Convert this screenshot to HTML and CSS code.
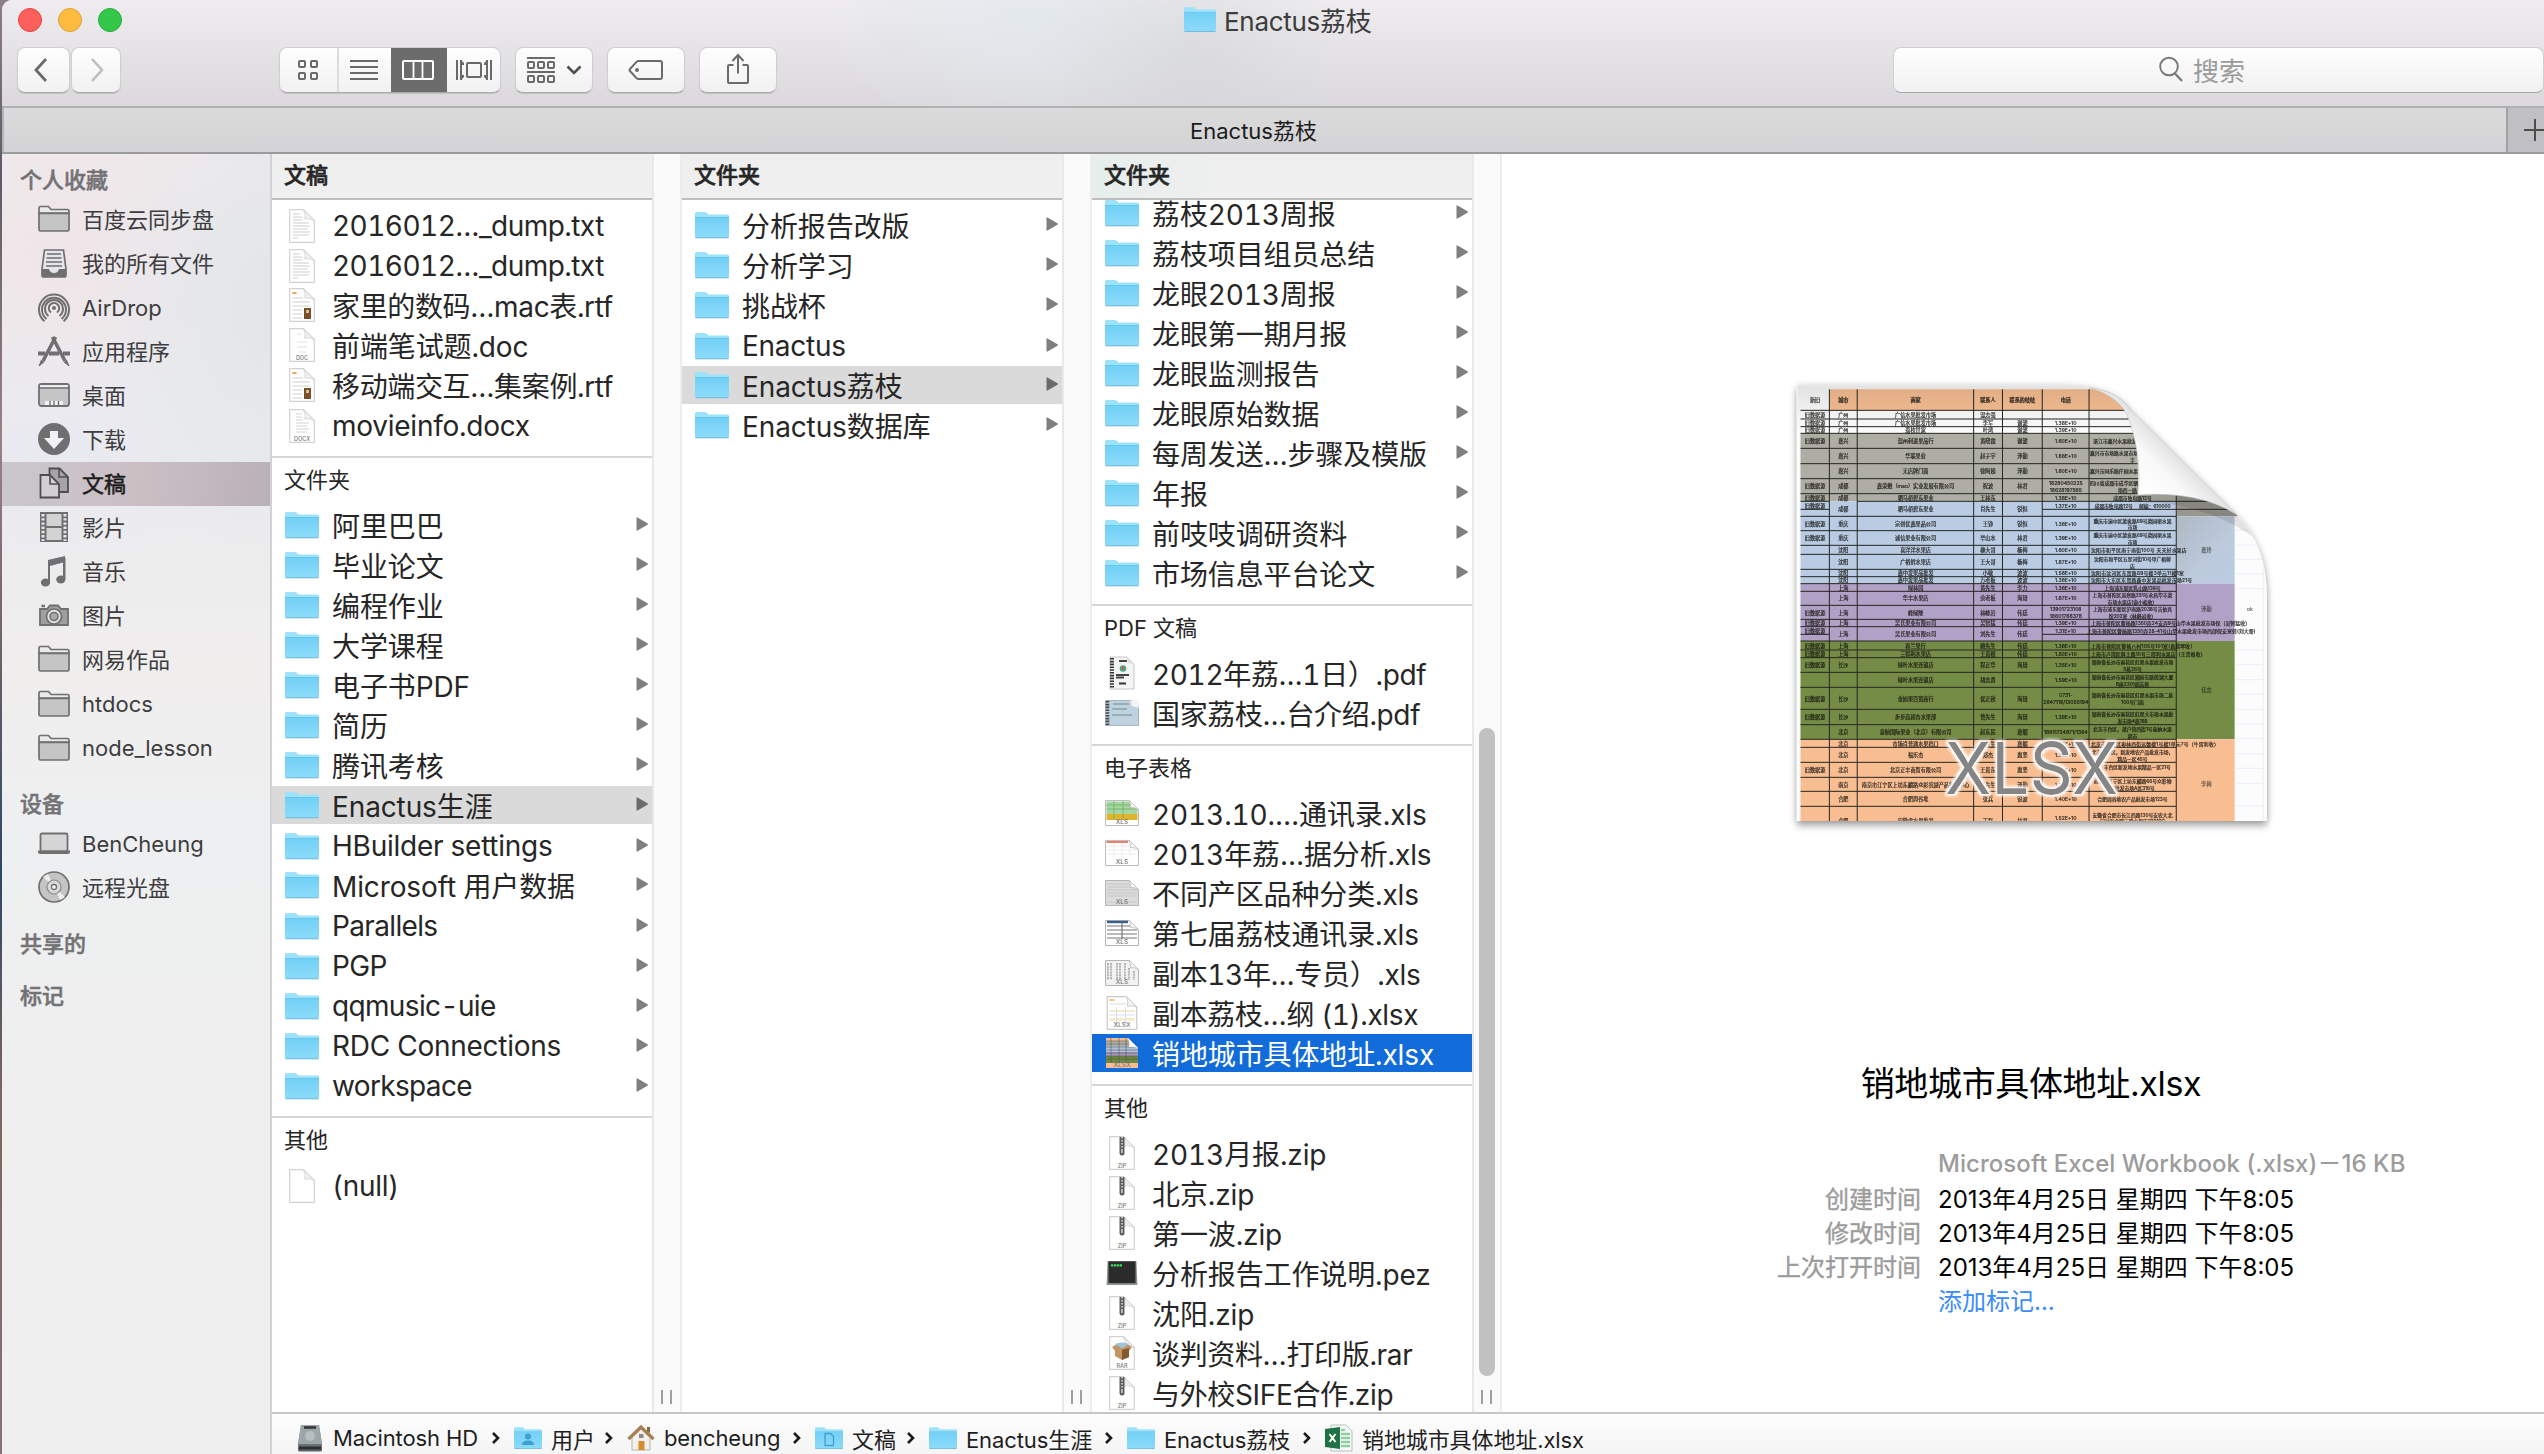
FILE: index.html
```html
<!DOCTYPE html>
<html lang="zh-CN">
<head>
<meta charset="utf-8">
<title>Enactus荔枝</title>
<link rel="stylesheet" href="styles.css">
</head>
<body>
<svg class="sprite" aria-hidden="true">
  <defs>
    <linearGradient id="g-folder" x1="0" y1="0" x2="0" y2="1"><stop offset="0" stop-color="#73d0f6"/><stop offset="1" stop-color="#8ddcfa"/></linearGradient>
    <linearGradient id="g-disk" x1="0" y1="0" x2="0" y2="1"><stop offset="0" stop-color="#9aa0a2"/><stop offset="1" stop-color="#5d6466"/></linearGradient>
    <symbol id="folder" viewBox="0 0 34 28">
      <path d="M0 2.500Q0 1 1.500 1H10Q11.500 1 12.500 2.500L13.300 3.500H32.500Q34 3.500 34 5V10H0Z" fill="#9ce2fb"/>
      <path d="M0 7H34V25.500Q34 27 32.500 27H1.500Q0 27 0 25.500Z" fill="url(#g-folder)"/>
      <path d="M0 6.500H34" stroke="#6ac5ea" stroke-width="1"/>
      <path d="M.500 26.800H33.500" stroke="#6fb6d4" stroke-width="1"/>
    </symbol>
    <symbol id="page" viewBox="0 0 26 34">
      <path d="M.7 .7H14.500L25.300 11.500V33.300H.7Z" fill="#fff" stroke="#d2d2d2" stroke-width="1.200"/>
      <path d="M14.500 .7Q17 5 15.800 10Q21 9 25.300 11.500Z" fill="#f1f1f1" stroke="#cfcfcf" stroke-width=".8"/>
    </symbol>
    <symbol id="txt" viewBox="0 0 26 34">
      <use href="#page" width="26" height="34"/>
      <path d="M4 5H11M4 8H13M4 11H13M4 14H20M4 17H21M4 20H19M4 23H21M4 26H20M4 29H9" stroke="#cfcfcf" stroke-width="1.100"/>
    </symbol>
    <symbol id="rtf" viewBox="0 0 26 34">
      <use href="#page" width="26" height="34"/>
      <path d="M3.500 5H7.500" stroke="#e7a85a" stroke-width="2"/>
      <path d="M3.500 10H14M3.500 14H21M3.500 18H21M3.500 22H13M3.500 26H13M3.500 30H13" stroke="#cfcfcf" stroke-width="1.100"/>
      <path d="M15 20H22V31H15Z" fill="#76502b"/><path d="M17 22H20V25H17Z" fill="#e0c08a"/>
    </symbol>
    <symbol id="doc" viewBox="0 0 26 34">
      <use href="#page" width="26" height="34"/>
      <path d="M8 6H12M8 14H18M8 19H18M10 24H17" stroke="#e2e2e2"/>
      <text x="13" y="31.500" class="tag-text">DOC</text>
    </symbol>
    <symbol id="docx" viewBox="0 0 26 34">
      <use href="#page" width="26" height="34"/>
      <path d="M7 5H13M7 8H13M7 11H14M7 14H20M7 17H18M7 20H20M7 23H18" stroke="#d2d2d2"/>
      <text x="13" y="31.500" class="tag-text">DOCX</text>
    </symbol>
    <symbol id="zip" viewBox="0 0 26 34">
      <use href="#page" width="26" height="34"/>
      <path d="M10.500 1H15.500V17Q15.500 19.500 13 19.500T10.500 17Z" fill="#5b5e60"/>
      <path d="M13 1V13" stroke="#d0d3d4" stroke-width="1.600" stroke-dasharray="1.500 1.500"/><path d="M13 13V17" stroke="#d0d3d4" stroke-width="1.500"/>
      <text x="13" y="31.500" class="tag-text">ZIP</text>
    </symbol>
    <symbol id="rar" viewBox="0 0 26 34">
      <use href="#page" width="26" height="34"/>
      <path d="M3 11L8 8L13 11L18 8L23 11L20 15V21L13 24L6 20V15Z" fill="#c09563"/>
      <path d="M6 8Q12 5 20 8L13 12.500Z" fill="#9cc3dc"/><path d="M13 14L20 12V21L13 24Z" fill="#80592e"/>
      <text x="13" y="31.500" class="tag-text">RAR</text>
    </symbol>
    <symbol id="pez" viewBox="0 0 32 27">
      <path d="M1 1H31L32 26H0Z" fill="#8b9193"/><path d="M2 1.500H30V24H2Z" fill="#2b2b2b"/>
      <path d="M4.500 5.500H16" stroke="#3ddc6a" stroke-width="2.400" stroke-dasharray="2.400 .6"/>
    </symbol>
    <symbol id="pdf1" viewBox="0 0 26 34">
      <path d="M1 1H18L25 8V33H1Z" fill="#f4f4f4" stroke="#c7c7c7"/><path d="M18 1L19 7L25 8Z" fill="#ddd"/>
      <path d="M3 2V32" stroke="#333" stroke-width="4" stroke-dasharray="1.600 1.200"/>
      <path d="M10 5H18M7 19H20M7 21.500H15" stroke="#444" stroke-width="1.800"/><circle cx="14" cy="12.500" r="3.300" fill="#4aa88b"/><circle cx="14" cy="12" r="1.400" fill="#d05545"/>
      <path d="M10 27.500H17" stroke="#333" stroke-width="2"/>
    </symbol>
    <symbol id="pdf2" viewBox="0 0 34 26">
      <path d="M.5 .5H27L33.500 6V25.500H.5Z" fill="#bfd2df" stroke="#a9b4bb"/><path d="M25 .5H33.500V8L27 6Z" fill="#f3f3f3"/>
      <path d="M2.500 1V25" stroke="#444" stroke-width="3.600" stroke-dasharray="1.600 1.200"/><path d="M8 4H24M7 9H22M7 15H27" stroke="#6f8a86" stroke-width="1"/>
    </symbol>
    <symbol id="sheet-fold" viewBox="0 0 34 26">
      <path d="M24 0Q26 4 25.500 7.500Q30 7 34 10Z" fill="#f8f8f8" stroke="#bbb" stroke-width=".8"/>
    </symbol>
    <symbol id="xls-a" viewBox="0 0 34 26">
      <path d="M.5 .5H24L33.500 10V25.500H.5Z" fill="#fff" stroke="#bdbdbd"/>
      <path d="M1.500 1.500H24.500L32.500 9.500V14H1.500Z" fill="#a5d6a0"/><path d="M1.500 14H32.500V20H1.500Z" fill="#e2b32c"/>
      <path d="M1.500 5H27M1.500 9H32M9 1V20M18 1V20" stroke="#6fae6c" stroke-width=".8"/><use href="#sheet-fold" width="34" height="26"/>
      <text x="17" y="23.500" class="tag-text big">XLS</text>
    </symbol>
    <symbol id="xls-b" viewBox="0 0 34 26">
      <path d="M.5 .5H24L33.500 10V25.500H.5Z" fill="#fff" stroke="#bdbdbd"/><path d="M1.500 2H23" stroke="#ee7d6f" stroke-width="2"/>
      <path d="M2 6H25M2 10H31M2 14H31M9 3V17M17 3V17M25 8V17" stroke="#ececec"/><use href="#sheet-fold" width="34" height="26"/>
      <text x="17" y="23.500" class="tag-text big">XLS</text>
    </symbol>
    <symbol id="xls-c" viewBox="0 0 34 26">
      <path d="M.5 .5H24L33.500 10V25.500H.5Z" fill="#dcdcdc" stroke="#b5b5b5"/>
      <path d="M2 4H25M2 7H26M2 10H32M2 13H32M2 16H32M2 22H32" stroke="#c6c6c6"/><use href="#sheet-fold" width="34" height="26"/>
      <text x="17" y="23.500" class="tag-text big">XLS</text>
    </symbol>
    <symbol id="xls-d" viewBox="0 0 34 26">
      <path d="M.5 .5H24L33.500 10V25.500H.5Z" fill="#fff" stroke="#b5b5b5"/><path d="M2 2H23" stroke="#3a5f8f" stroke-width="2.400"/>
      <path d="M2 6H25M2 10H32M2 14H32M2 18H32M17 3V19" stroke="#777" stroke-width="1.200"/><use href="#sheet-fold" width="34" height="26"/>
      <text x="17" y="24" class="tag-text big">XLS</text>
    </symbol>
    <symbol id="xls-e" viewBox="0 0 34 26">
      <path d="M.5 .5H24L33.500 10V25.500H.5Z" fill="#f2f2f2" stroke="#b5b5b5"/>
      <path d="M3 3V20M6 3V20M12 3V20M15 3V20M20 3V20M24 8V20M29 11V20" stroke="#a5a5a5" stroke-width="1.600" stroke-dasharray="2 .8"/><use href="#sheet-fold" width="34" height="26"/>
      <text x="17" y="23.500" class="tag-text big">XLS</text>
    </symbol>
    <symbol id="xlsx-f" viewBox="0 0 31 34">
      <path d="M.7 .7H20L30.300 11V33.300H.7Z" fill="#fff" stroke="#bdbdbd"/><path d="M3 4H8" stroke="#e8b95a" stroke-width="1.500"/>
      <path d="M3 14H28V16H3ZM3 22H28V25H3Z" fill="#f4eccd"/><path d="M3 8H20M3 19H28M10 11V28M19 11V28" stroke="#dcdcf0"/><path d="M20 .7Q22 6 21 10.500Q26 9 30.300 11Z" fill="#f3f3f3" stroke="#c5c5c5" stroke-width=".8"/>
      <text x="15.500" y="31" class="tag-text big">XLSX</text>
    </symbol>
    <symbol id="xlsx-g" viewBox="0 0 32 30">
      <path d="M0 0H22L32 10V30H0Z" fill="#f5bd92"/><path d="M0 3H24L27 8H0Z" fill="#b3b2a6"/><path d="M0 8H30L32 10V14H0Z" fill="#b1c4dc"/><path d="M0 14H32V18H0Z" fill="#a998bd"/><path d="M0 18H32V25H0Z" fill="#6d8842"/>
      <path d="M0 3H24M0 6H25M0 9H28M0 12H32M0 15H32M0 18H32M0 21H32M5 0V25M13 0V25M20 0V25" stroke="#4b4b46" stroke-width=".5"/>
      <path d="M22 0Q24 5 23 9Q28 8 32 10Z" fill="#fff"/>
      <text x="16" y="29" class="tag-text big">XLSX</text>
    </symbol>
    <symbol id="excel" viewBox="0 0 28 28">
      <path d="M6 1H21L27 7V27H6Z" fill="#f6faf7" stroke="#aab5ad" stroke-width=".8"/>
      <path d="M16 6H20M16 10H25M16 14H25M16 18H25M16 22H25" stroke="#8fcda5" stroke-width="2.600"/>
      <path d="M0 5L15 3V25L0 23Z" fill="#1f7244"/><path d="M4.500 10L10.500 18M10.500 10L4.500 18" stroke="#fff" stroke-width="2"/>
    </symbol>
    <symbol id="sfolder" viewBox="0 0 32 28">
      <path d="M1 3Q1 1.500 2.500 1.500H10.500L13 4.500H29.500Q31 4.500 31 6V8H1Z" fill="#e9e9e9" stroke="#6f6f71" stroke-width="1.700"/>
      <path d="M1 8.500H31V24.500Q31 26 29.500 26H2.500Q1 26 1 24.500Z" fill="#c6c5c6" stroke="#6f6f71" stroke-width="1.700"/>
    </symbol>
    <symbol id="arrow" viewBox="0 0 12 14"><path d="M.5 1Q.5 0 1.500 .5L11.500 6.300Q12.300 7 11.500 7.700L1.500 13.500Q.5 14 .5 13Z" fill="currentColor"/></symbol>
    <symbol id="chev" viewBox="0 0 10 14"><path d="M2 2L7 7L2 12" fill="none" stroke="#1b1b1b" stroke-width="2.600"/></symbol>
  </defs>
</svg>

<div class="window">
  <header class="toolbar">
    <div class="titlebar">
      <div class="lights"><i class="light red"></i><i class="light yellow"></i><i class="light green"></i></div>
      <div class="title"><svg class="title-icon"><use href="#folder"/></svg><span>Enactus荔枝</span></div>
    </div>
    <div class="tools">
      <div class="btn back"><svg width="16" height="26" viewBox="0 0 16 26"><path d="M13 2L3 13L13 24" fill="none" stroke="#6b6b6b" stroke-width="2.800"/></svg></div>
      <div class="btn forward"><svg width="16" height="26" viewBox="0 0 16 26"><path d="M3 2L13 13L3 24" fill="none" stroke="#bdbdbd" stroke-width="2.600"/></svg></div>
      <div class="btn views">
        <span class="view"><svg width="22" height="22" viewBox="0 0 22 22" fill="none" stroke="#6a6a6a" stroke-width="2"><rect x="1" y="2" width="6" height="6" rx="1"/><rect x="13" y="2" width="6" height="6" rx="1"/><rect x="1" y="14" width="6" height="6" rx="1"/><rect x="13" y="14" width="6" height="6" rx="1"/></svg></span>
        <span class="view list"><svg width="28" height="22" viewBox="0 0 28 22" stroke="#6a6a6a" stroke-width="2"><path d="M0 2H28M0 8H28M0 14H28M0 20H28"/></svg></span>
        <span class="view active"><svg width="32" height="22" viewBox="0 0 32 22"><rect x="1" y="2" width="30" height="18" rx="1" fill="none" stroke="#fff" stroke-width="2"/><path d="M11.500 2V20M20.500 2V20" stroke="#fff" stroke-width="1.800"/></svg></span>
        <span class="view flow"><svg width="36" height="22" viewBox="0 0 36 22" fill="none" stroke="#6a6a6a" stroke-width="2"><path d="M1 1V21M35 1V21M5 1V21M31 1V21"/><path d="M5 1L8 4V6H5ZM5 21L8 18V16H5ZM31 1L28 4V6H31ZM31 21L28 18V16H31Z" fill="#6a6a6a" stroke="none"/><rect x="11" y="4" width="14" height="14" rx="1"/></svg></span>
      </div>
      <div class="btn arrange">
        <svg width="28" height="28" viewBox="0 0 28 28" fill="none" stroke="#6a6a6a" stroke-width="2"><path d="M0 2H28M0 16H28"/><rect x="1" y="6" width="6" height="6" rx="1"/><rect x="11" y="6" width="6" height="6" rx="1"/><rect x="21" y="6" width="6" height="6" rx="1"/><rect x="1" y="20" width="6" height="6" rx="1"/><rect x="11" y="20" width="6" height="6" rx="1"/><rect x="21" y="20" width="6" height="6" rx="1"/></svg>
        <svg width="16" height="10" viewBox="0 0 16 10"><path d="M1.500 1.500L8 8L14.500 1.500" fill="none" stroke="#4f4f4f" stroke-width="2.600"/></svg>
      </div>
      <div class="btn tag"><svg width="36" height="22" viewBox="0 0 36 22"><path d="M10.500 2H32Q34 2 34 4V18Q34 20 32 20H10.500Q9 20 8 18.500L2 12Q1 11 2 10L8 3.500Q9 2 10.500 2Z" fill="none" stroke="#6a6a6a" stroke-width="2"/><circle cx="9" cy="11" r="2" fill="#6a6a6a"/></svg></div>
      <div class="btn share"><svg width="24" height="32" viewBox="0 0 24 32"><path d="M7.500 12H3.500Q2 12 2 13V29Q2 30 3 30H21Q22 30 22 29V13Q22 12 21 12H16.500M12 20.500V2M6.500 8L12 2L17.500 8" fill="none" stroke="#6a6a6a" stroke-width="2"/></svg></div>
      <div class="search"><svg width="24" height="26" viewBox="0 0 24 26"><circle cx="10" cy="10.500" r="8.800" fill="none" stroke="#777" stroke-width="1.900"/><path d="M16 17.500L23 25" stroke="#777" stroke-width="2.200"/></svg><span>搜索</span></div>
    </div>
  </header>
  <div class="tabs"><div class="tab">Enactus荔枝</div><div class="new-tab"><svg width="22" height="22" viewBox="0 0 22 22"><path d="M11 0V22M0 11H22" stroke="#4c4c4c" stroke-width="2"/></svg></div></div>

  <div class="content">
    <nav class="sidebar">
      <h2 class="first">个人收藏</h2>
      <div class="place"><svg class="pi" viewBox="0 0 32 32"><use href="#sfolder" y="2" width="32" height="28"/></svg>百度云同步盘</div>
      <div class="place"><svg class="pi" viewBox="0 0 32 32"><path d="M6.500 3H25.500L28 22V28Q28 30 26 30H6Q4 30 4 28V22Z" fill="#e6e6e8" stroke="#6f6f71" stroke-width="1.700"/><path d="M9 7H23M8.500 11H23.500M8 15H24M8 19H24" stroke="#6f6f71" stroke-width="1.700"/><path d="M4 22H11Q12 26 16 26T21 22H28V28Q28 30 26 30H6Q4 30 4 28Z" fill="#6f6f71"/></svg>我的所有文件</div>
      <div class="place latin"><svg class="pi" viewBox="0 0 32 32" fill="none" stroke="#6f6f71" stroke-width="2"><circle cx="16" cy="16" r="2" fill="#6f6f71" stroke="none"/><path d="M13 20.500A5.200 5.200 0 1 1 19 20.500M10.500 24A9 9 0 1 1 21.500 24M8.500 27A12 12 0 1 1 23.500 27M6.500 29.200A15 15 0 1 1 25.500 29.200"/></svg>AirDrop</div>
      <div class="place"><svg class="pi" viewBox="0 0 32 32" fill="none"><path d="M0 18.500H7M11 18.500H21M25 18.500H32" stroke="#6f6f71" stroke-width="4"/><path d="M14.500 2L27 26" stroke="#6f6f71" stroke-width="3.600"/><path d="M17.500 2L5 26" stroke="#6f6f71" stroke-width="3.600"/><path d="M3.500 25L1 31L6 27M28.500 25L31 31L26 27" fill="#6f6f71" stroke="#6f6f71"/></svg>应用程序</div>
      <div class="place"><svg class="pi" viewBox="0 0 32 32"><rect x="1" y="5" width="30" height="22" rx="2.500" fill="#c6c5c6" stroke="#6f6f71" stroke-width="1.800"/><path d="M2 6H30V8.500H2Z" fill="#eee"/><path d="M1 9H31" stroke="#6f6f71" stroke-width="1.500"/><path d="M7 22H25V26H7Z" fill="#f2f2f2"/><path d="M12 22V26M16 22V26M20.500 22V26" stroke="#6f6f71" stroke-width="1.400"/></svg>桌面</div>
      <div class="place"><svg class="pi" viewBox="0 0 32 32"><circle cx="16" cy="16" r="16" fill="#6f6f71"/><path d="M12 8H20V15H26L16 26L6 15H12Z" fill="#f1f2f4"/></svg>下载</div>
      <div class="place selected"><svg class="pi" viewBox="0 0 32 32"><path d="M11.500 1.500H21.500L30 10V25H11.500Z" fill="#a7a4a9" stroke="#4f4d52" stroke-width="1.800"/><path d="M21 2V10H29" fill="none" stroke="#4f4d52" stroke-width="1.500"/><path d="M2.500 8H12L21 17V30.500H2.500Z" fill="#d2ced3" stroke="#4f4d52" stroke-width="1.800"/><path d="M12 8V17H21" fill="none" stroke="#4f4d52" stroke-width="1.600"/></svg>文稿</div>
      <div class="place"><svg class="pi" viewBox="0 0 32 32"><rect x="2" y="1" width="28" height="30" fill="#6f6f71"/><path d="M8.500 3H23.500V15H8.500ZM8.500 17H23.500V29H8.500Z" fill="#d4d3d4"/><path d="M5 3V30M27 3V30" stroke="#e8e8e8" stroke-width="3" stroke-dasharray="2.400 1.800"/></svg>影片</div>
      <div class="place"><svg class="pi" viewBox="0 0 32 32" fill="#6f6f71"><path d="M10 5L27 1V7L12 11V27H10Z"/><path d="M25 3H27.500V24H25Z"/><ellipse cx="7.500" cy="27.500" rx="4.600" ry="4"/><ellipse cx="22.800" cy="24.500" rx="4.600" ry="4"/></svg>音乐</div>
      <div class="place"><svg class="pi" viewBox="0 0 32 32"><path d="M2 10H9L12 6.500H20L23 10H30V26H2Z" fill="#9f9fa1" stroke="#6f6f71" stroke-width="1.800"/><path d="M3.500 7H7" stroke="#6f6f71" stroke-width="2.500"/><circle cx="16" cy="17.500" r="7.500" fill="#e4e4e4" stroke="#6f6f71" stroke-width="1.700"/><circle cx="16" cy="17.500" r="4" fill="#aaa" stroke="#6f6f71" stroke-width="1.600"/></svg>图片</div>
      <div class="place"><svg class="pi" viewBox="0 0 32 32"><use href="#sfolder" y="2" width="32" height="28"/></svg>网易作品</div>
      <div class="place latin"><svg class="pi" viewBox="0 0 32 32"><use href="#sfolder" y="2" width="32" height="28"/></svg>htdocs</div>
      <div class="place latin"><svg class="pi" viewBox="0 0 32 32"><use href="#sfolder" y="2" width="32" height="28"/></svg>node_lesson</div>
      <h2>设备</h2>
      <div class="place latin"><svg class="pi" viewBox="0 0 32 32"><rect x="2.500" y="5.500" width="27" height="18" rx="1.500" fill="#d6d6d6" stroke="#6f6f71" stroke-width="1.800"/><path d="M0 22.500H32V24Q32 26 30 26H2Q0 26 0 24Z" fill="#6f6f71"/></svg>BenCheung</div>
      <div class="place"><svg class="pi" viewBox="0 0 32 32"><circle cx="16" cy="16" r="15" fill="#c4c4c4" stroke="#6f6f71" stroke-width="1.700"/><path d="M16 16L5 6A15 15 0 0 1 10 3ZM16 16L27 26A15 15 0 0 1 22 29Z" fill="#eee"/><circle cx="16" cy="16" r="7" fill="#d9d9d9" stroke="#8a8a8a" stroke-width="1.200"/><circle cx="16" cy="16" r="2.500" fill="#fff" stroke="#6f6f71" stroke-width="1.300"/></svg>远程光盘</div>
      <h2>共享的</h2>
      <h2>标记</h2>
    </nav>

    <section class="column">
      <h3>文稿</h3>
      <div class="rows">
        <div class="row dump"><svg class="fi"><use href="#txt"/></svg>2016012…_dump.txt</div>
        <div class="row dump"><svg class="fi"><use href="#txt"/></svg>2016012…_dump.txt</div>
        <div class="row tight"><svg class="fi"><use href="#rtf"/></svg>家里的数码…mac表.rtf</div>
        <div class="row"><svg class="fi"><use href="#doc"/></svg>前端笔试题.doc</div>
        <div class="row tight"><svg class="fi"><use href="#rtf"/></svg>移动端交互…集案例.rtf</div>
        <div class="row hb"><svg class="fi"><use href="#docx"/></svg>movieinfo.docx</div>
        <h4>文件夹</h4>
        <div class="row dir"><svg class="fi"><use href="#folder"/></svg>阿里巴巴<svg class="ar"><use href="#arrow"/></svg></div>
        <div class="row dir"><svg class="fi"><use href="#folder"/></svg>毕业论文<svg class="ar"><use href="#arrow"/></svg></div>
        <div class="row dir"><svg class="fi"><use href="#folder"/></svg>编程作业<svg class="ar"><use href="#arrow"/></svg></div>
        <div class="row dir"><svg class="fi"><use href="#folder"/></svg>大学课程<svg class="ar"><use href="#arrow"/></svg></div>
        <div class="row dir"><svg class="fi"><use href="#folder"/></svg>电子书PDF<svg class="ar"><use href="#arrow"/></svg></div>
        <div class="row dir"><svg class="fi"><use href="#folder"/></svg>简历<svg class="ar"><use href="#arrow"/></svg></div>
        <div class="row dir"><svg class="fi"><use href="#folder"/></svg>腾讯考核<svg class="ar"><use href="#arrow"/></svg></div>
        <div class="row dir open"><svg class="fi"><use href="#folder"/></svg>Enactus生涯<svg class="ar"><use href="#arrow"/></svg></div>
        <div class="row dir hb"><svg class="fi"><use href="#folder"/></svg>HBuilder settings<svg class="ar"><use href="#arrow"/></svg></div>
        <div class="row dir"><svg class="fi"><use href="#folder"/></svg>Microsoft 用户数据<svg class="ar"><use href="#arrow"/></svg></div>
        <div class="row dir n"><svg class="fi"><use href="#folder"/></svg>Parallels<svg class="ar"><use href="#arrow"/></svg></div>
        <div class="row dir n"><svg class="fi"><use href="#folder"/></svg>PGP<svg class="ar"><use href="#arrow"/></svg></div>
        <div class="row dir n"><svg class="fi"><use href="#folder"/></svg>qqmusic-uie<svg class="ar"><use href="#arrow"/></svg></div>
        <div class="row dir hb"><svg class="fi"><use href="#folder"/></svg>RDC Connections<svg class="ar"><use href="#arrow"/></svg></div>
        <div class="row dir n"><svg class="fi"><use href="#folder"/></svg>workspace<svg class="ar"><use href="#arrow"/></svg></div>
        <h4>其他</h4>
        <div class="row hb"><svg class="fi"><use href="#page"/></svg>(null)</div>
      </div>
    </section>
    <div class="gutter"><i class="grip"></i></div>

    <section class="column">
      <h3>文件夹</h3>
      <div class="rows">
        <div class="row dir"><svg class="fi"><use href="#folder"/></svg>分析报告改版<svg class="ar"><use href="#arrow"/></svg></div>
        <div class="row dir"><svg class="fi"><use href="#folder"/></svg>分析学习<svg class="ar"><use href="#arrow"/></svg></div>
        <div class="row dir"><svg class="fi"><use href="#folder"/></svg>挑战杯<svg class="ar"><use href="#arrow"/></svg></div>
        <div class="row dir hb"><svg class="fi"><use href="#folder"/></svg>Enactus<svg class="ar"><use href="#arrow"/></svg></div>
        <div class="row dir open"><svg class="fi"><use href="#folder"/></svg>Enactus荔枝<svg class="ar"><use href="#arrow"/></svg></div>
        <div class="row dir"><svg class="fi"><use href="#folder"/></svg>Enactus数据库<svg class="ar"><use href="#arrow"/></svg></div>
      </div>
    </section>
    <div class="gutter"><i class="grip"></i></div>

    <section class="column third">
      <h3>文件夹</h3>
      <div class="rows scrolled">
        <div class="row dir"><svg class="fi"><use href="#folder"/></svg>荔枝2013周报<svg class="ar"><use href="#arrow"/></svg></div>
        <div class="row dir"><svg class="fi"><use href="#folder"/></svg>荔枝项目组员总结<svg class="ar"><use href="#arrow"/></svg></div>
        <div class="row dir"><svg class="fi"><use href="#folder"/></svg>龙眼2013周报<svg class="ar"><use href="#arrow"/></svg></div>
        <div class="row dir"><svg class="fi"><use href="#folder"/></svg>龙眼第一期月报<svg class="ar"><use href="#arrow"/></svg></div>
        <div class="row dir"><svg class="fi"><use href="#folder"/></svg>龙眼监测报告<svg class="ar"><use href="#arrow"/></svg></div>
        <div class="row dir"><svg class="fi"><use href="#folder"/></svg>龙眼原始数据<svg class="ar"><use href="#arrow"/></svg></div>
        <div class="row dir"><svg class="fi"><use href="#folder"/></svg>每周发送…步骤及模版<svg class="ar"><use href="#arrow"/></svg></div>
        <div class="row dir"><svg class="fi"><use href="#folder"/></svg>年报<svg class="ar"><use href="#arrow"/></svg></div>
        <div class="row dir"><svg class="fi"><use href="#folder"/></svg>前吱吱调研资料<svg class="ar"><use href="#arrow"/></svg></div>
        <div class="row dir"><svg class="fi"><use href="#folder"/></svg>市场信息平台论文<svg class="ar"><use href="#arrow"/></svg></div>
        <h4>PDF 文稿</h4>
        <div class="row tight"><svg class="fi"><use href="#pdf1"/></svg>2012年荔…1日）.pdf</div>
        <div class="row tight"><svg class="fi wide"><use href="#pdf2"/></svg>国家荔枝…台介绍.pdf</div>
        <h4>电子表格</h4>
        <div class="row"><svg class="fi wide"><use href="#xls-a"/></svg>2013.10.…通讯录.xls</div>
        <div class="row"><svg class="fi wide"><use href="#xls-b"/></svg>2013年荔…据分析.xls</div>
        <div class="row"><svg class="fi wide"><use href="#xls-c"/></svg>不同产区品种分类.xls</div>
        <div class="row"><svg class="fi wide"><use href="#xls-d"/></svg>第七届荔枝通讯录.xls</div>
        <div class="row tight"><svg class="fi wide"><use href="#xls-e"/></svg>副本13年…专员）.xls</div>
        <div class="row tight"><svg class="fi"><use href="#xlsx-f"/></svg>副本荔枝…纲 (1).xlsx</div>
        <div class="row current"><svg class="fi thumb"><use href="#xlsx-g"/></svg>销地城市具体地址.xlsx</div>
        <h4>其他</h4>
        <div class="row"><svg class="fi"><use href="#zip"/></svg>2013月报.zip</div>
        <div class="row"><svg class="fi"><use href="#zip"/></svg>北京.zip</div>
        <div class="row"><svg class="fi"><use href="#zip"/></svg>第一波.zip</div>
        <div class="row"><svg class="fi pez"><use href="#pez"/></svg>分析报告工作说明.pez</div>
        <div class="row"><svg class="fi"><use href="#zip"/></svg>沈阳.zip</div>
        <div class="row tight"><svg class="fi"><use href="#rar"/></svg>谈判资料…打印版.rar</div>
        <div class="row tight"><svg class="fi"><use href="#zip"/></svg>与外校SIFE合作.zip</div>
      </div>
    </section>
    <div class="gutter"><i class="scrollbar"></i><i class="grip"></i></div>

    <section class="preview">
      <svg class="sheet" viewBox="0 0 1568 1410" preserveAspectRatio="none">
        <defs>
          <clipPath id="pg"><path d="M78 45H880C975 48 1050 66 1082 118Q1108 200 1108 374Q1290 362 1402 432C1468 500 1495 580 1495 680V1353H78Z"/></clipPath>
          <linearGradient id="curl" gradientUnits="userSpaceOnUse" x1="1130" y1="380" x2="1240" y2="270"><stop offset="0" stop-color="#fff"/><stop offset=".6" stop-color="#f8f8f8"/><stop offset="1" stop-color="#e2e2e2"/></linearGradient>
          <linearGradient id="pale" x1="0" y1="0" x2="1" y2="1"><stop offset="0" stop-color="#aeb8c4"/><stop offset=".6" stop-color="#bccadb"/><stop offset="1" stop-color="#b9cce4"/></linearGradient>
          <linearGradient id="topshade" x1="0" y1="0" x2="0" y2="1"><stop offset="0" stop-color="#000" stop-opacity=".1"/><stop offset="1" stop-color="#000" stop-opacity="0"/></linearGradient>
          <filter id="sh" x="-10%" y="-10%" width="120%" height="120%"><feDropShadow dx="0" dy="10" stdDeviation="12" flood-opacity=".45"/></filter>
          <filter id="glow" x="-20%" y="-20%" width="140%" height="140%"><feMorphology in="SourceAlpha" operator="dilate" radius="5"/><feGaussianBlur stdDeviation="4" result="b"/><feFlood flood-color="#fff"/><feComposite in2="b" operator="in"/><feMerge><feMergeNode/><feMergeNode in="SourceGraphic"/></feMerge></filter>
        </defs>
        <path filter="url(#sh)" fill="#fcfcfc" d="M78 45H880C975 48 1050 66 1082 118L1402 432C1468 500 1495 580 1495 680V1353H78Z"/>
        <g clip-path="url(#pg)">
          <path fill="#f9c094" d="M176 58H1222V121H176Z"/>
          <path fill="#aeaea4" d="M89 190H1222V394H89Z"/><path fill="#97978f" d="M1222 360H1440V439H1222Z"/>
          <path fill="#b9cce4" d="M89 394H1222V641H89Z"/><path fill="url(#pale)" d="M1222 439H1398V641H1222Z"/>
          <path fill="#b2a1c7" d="M89 641H1398V813H89Z"/>
          <path fill="#748c45" d="M89 813H1398V1108H89Z"/>
          <path fill="#f9bd92" d="M89 1108H1398V1353H89Z"/>
          <path d="M1400 480H1484M1400 525H1484M1400 568H1484M1400 612H1484M1400 656H1484M1400 840H1484M1400 884H1484M1400 929H1484M1400 973H1484M1400 1018H1484M1400 1062H1484M1400 1106H1484M1400 1151H1484M1400 1195H1484M1400 1240H1484M1400 1308H1484M1484 500V1353" stroke="#eeecf9" stroke-width="3"/>
          <path d="M89 121H1222M89 147H1222M89 170H1222M89 190H1222M89 235H1222M89 281H1222M89 326H1222M89 371H1222M89 394H176M260 394H1222M89 418H176M818 418H1222M89 439H1222M89 482H1222M89 526H1222M89 553H1222M89 598H1222M89 620H1222M89 641H1222M89 664H1222M89 706H1222M89 748H1222M89 770H1222M89 793H176M818 793H1222M89 813H1222M89 840H1222M89 863H1222M89 907H1222M89 952H1222M89 1018H1222M89 1064H1222M89 1108H1222M89 1132H1222M89 1177H1222M89 1222H1222M89 1264H1222M89 1309H1222M1222 394H1398M1222 418H1420" stroke="#252622" stroke-width="3"/>
          <path d="M176 58V1353M260 58V1353M611 58V1353M698 58V1353M818 58V1353M959 58V1353M1222 371V1353" stroke="#252622" stroke-width="3"/>
          <g class="cells">
            <g transform="translate(133 6)"><text y="91">新旧</text><text y="136">旧数据源</text><text y="160">旧数据源</text><text y="181">旧数据源</text><text y="214">旧数据源</text><text y="349">旧数据源</text><text y="383">旧数据源</text><text y="407">旧数据源</text><text y="461">旧数据源</text><text y="504">旧数据源</text><text y="728">旧数据源</text><text y="760">旧数据源</text><text y="783">旧数据源</text><text y="828">旧数据源</text><text y="852">旧数据源</text><text y="885">旧数据源</text><text y="986">旧数据源</text><text y="1042">旧数据源</text><text y="1200">旧数据源</text></g>
            <g transform="translate(218 6)"><text class="b" y="91">城市</text><text y="136">广州</text><text y="160">广州</text><text y="181">广州</text><text y="214">嘉兴</text><text y="259">嘉兴</text><text y="304">嘉兴</text><text y="349">成都</text><text y="383">成都</text><text y="416">成都</text><text y="461">重庆</text><text y="504">重庆</text><text y="540">沈阳</text><text y="576">沈阳</text><text y="609">沈阳</text><text y="631">沈阳</text><text y="653">上海</text><text y="685">上海</text><text y="728">上海</text><text y="760">上海</text><text y="793">上海</text><text y="828">上海</text><text y="852">上海</text><text y="885">长沙</text><text y="986">长沙</text><text y="1042">长沙</text><text y="1087">北京</text><text y="1121">北京</text><text y="1155">北京</text><text y="1200">北京</text><text y="1244">南京</text><text y="1287">合肥</text><text y="1352">合肥</text></g>
            <g transform="translate(436 6)"><text class="b" y="91">商家</text><text y="136">广信水果批发市场</text><text y="160">广信水果批发市场</text><text y="181">荔枝世家</text><text y="214">温州利进果品行</text><text y="259">华联果业</text><text y="304">无店牌门面</text><text y="349">鑫荣懋（mao）实业发展有限公司</text><text y="383">驷马桥碧东果业</text><text y="418">驷马桥碧东果业</text><text y="461">宗创优鑫果品公司</text><text y="504">诚信果业有限公司</text><text y="540">喜洋洋水果店</text><text y="576">广裕鲜水果店</text><text y="609">鑫中发果品批发</text><text y="631">鑫中发果品批发</text><text y="653">绿林园</text><text y="685">华丰水果店</text><text y="728">峰绿隆</text><text y="760">吴氏果业有限公司</text><text y="793">吴氏果业有限公司</text><text y="828">春兰果行</text><text y="852">三得利水果店</text><text y="885">绿叶水果连锁店</text><text y="930">绿叶水果连锁店</text><text y="986">金旭果百贸商行</text><text y="1042">步步高超市水果部</text><text y="1087">泰纳国际果业（北京）有限公司</text><text y="1121">市场肖普通水果档口</text><text y="1155">福乐杰</text><text y="1200">北京正丰商贸有限公司</text><text y="1244">南京市江宁区上坊东麟路众彩农副产品物流中心</text><text y="1287">合肥周谷堆</text><text y="1352">安徽省水果批发</text></g>
            <g transform="translate(654 6)"><text class="b" y="91">联系人</text><text y="136">温志强</text><text y="160">李军</text><text y="181">叶鸿</text><text y="214">黄晓霖</text><text y="259">赵子宇</text><text y="304">徐阿姨</text><text y="349">祝波</text><text y="383">王林东</text><text y="418">肖先生</text><text y="461">王铮</text><text y="504">毕山水</text><text y="540">柳大哥</text><text y="576">王大哥</text><text y="609">小敏</text><text y="631">万老板</text><text y="653">黄先生</text><text y="685">余老板</text><text y="728">林峰岩</text><text y="760">吴智猛</text><text y="793">刘先生</text><text y="828">鲍先生</text><text y="852">王贵根</text><text y="885">程正华</text><text y="930">胡志勇</text><text y="986">侯正秋</text><text y="1042">曾先生</text><text y="1087">赵东民</text><text y="1121">牛先生</text><text y="1155">郑杰</text><text y="1200">王贵东</text><text y="1244">陈先生</text><text y="1287">张兵</text><text y="1352">丁磊</text></g>
            <g transform="translate(758 6)"><text class="b" y="91">联系的吱吱</text><text y="160">谢懿</text><text y="181">谢懿</text><text y="214">谢懿</text><text y="259">泽勤</text><text y="304">泽勤</text><text y="349">林君</text><text y="418">锐恒</text><text y="461">锐恒</text><text y="504">林君</text><text y="540">杨梅</text><text y="576">杨梅</text><text y="609">波波</text><text y="631">波波</text><text y="653">李力</text><text y="685">海琦</text><text y="728">伟廷</text><text y="760">伟廷</text><text y="793">伟廷</text><text y="828">伟廷</text><text y="852">伟廷</text><text y="885">海琦</text><text y="986">海琦</text><text y="1042">海琦</text><text y="1087">嘉媚</text><text y="1121">嘉媚</text><text y="1155">惠坚</text><text y="1200">惠坚</text><text y="1244">泽勤</text><text y="1287">锐波</text><text y="1352">林君</text></g>
            <g transform="translate(889 6)"><text class="b" y="91">电话</text><text y="160">1.38E+10</text><text y="181">1.39E+10</text><text y="214">1.60E+10</text><text y="259">1.86E+10</text><text y="304">1.80E+10</text><text y="338">18280450225</text><text y="359">18628197565</text><text y="383">1.38E+10</text><text y="407">1.37E+10</text><text y="461">1.36E+10</text><text y="504">1.39E+10</text><text y="540">1.60E+10</text><text y="576">1.87E+10</text><text y="609">1.58E+10</text><text y="631">1.38E+10</text><text y="653">1.36E+10</text><text y="685">1.87E+10</text><text y="718">13901723108</text><text y="738">18601788378</text><text y="760">1.39E+10</text><text y="783">1.31E+10</text><text y="828">1.38E+10</text><text y="852">1.50E+10</text><text y="885">1.35E+10</text><text y="930">1.59E+10</text><text y="976">0731-</text><text y="997">2647119/13055194</text><text y="1042">1.39E+10</text><text y="1087">18611724871/1364</text><text y="1121">1.33E+10</text><text y="1155">1.35E+10</text><text y="1200">1.39E+10</text><text y="1244">1.38E+10</text><text y="1287">1.40E+10</text><text y="1343">1.52E+10</text></g>
            <g class="addr" transform="translate(1090 6)"><text class="cut" x="-118" y="214">浙江市嘉兴水果批发</text><text class="cut" x="-128" y="250">嘉兴市市场路水果市场</text><text y="270">字</text><text class="cut" x="-128" y="304">嘉兴市同乐路仟园水果</text><text class="cut" x="-128" y="338">四川省成都市成华区驷</text><text x="-15" y="359">场西一路</text><text y="383">成都市牧电路12号</text><text y="407">成都市牧电路12号　 邮编：610000</text><text y="452">重庆市渝中区菜袁路69号菜园坝水果</text><text y="472">市场</text><text y="495">重庆市渝中区菜袁路69号菜园坝水果</text><text y="515">市场</text><text y="566">沈阳市和平区五里河街10号甲广裕鲜</text><text y="587">店</text><text y="653">上海浦东新区乳山路139号</text><text y="676">上海市普陀区岚皋路251号永昌华丰菜</text><text y="696">市场水果店(俞小松收）</text><text y="718">上海市浦东新区沪南路2038号吉依宾</text><text y="738">馆202室（林峰岩收）</text><text y="875">湖南省长沙市雨花区红星水果批发市场</text><text y="896">5栋26号</text><text y="920">湖南省长沙市雨花区湘府东路莲湖大厦</text><text y="941">B座2301胡志勇</text><text y="976">湖南省长沙市雨花区红星水果市场二栋</text><text y="997">100号门面</text><text y="1032">湖南省长沙市雨花区红星大市场水果批</text><text y="1053">发市场4栋188</text><text y="1078">北京丰台区，菜户营西街1号泰纳水果</text><text y="1098">超市</text><text y="1145">北京丰台区，新发地农产品批发市场，</text><text y="1166">精品一区45号</text><text y="1190">北京丰台区新发地水果精品一区21号</text><text y="1234">南京市江宁区上坊东麟路66号众彩物</text><text y="1254">流批发市场A区316号</text><text y="1287">合肥周谷堆农产品批发市场123号</text><text y="1334">安徽省合肥市长江西路130号安农大北</text><text y="1354">门对面合肥三联水果店23212C</text></g>
            <g class="long" transform="translate(965 6)"><text y="540" textLength="288">沈阳市和平区南宁南街100号 天天好水果店</text><text y="609" textLength="280">沈阳市沈河区东贸路89号楼3单元11楼1室</text><text y="631" textLength="305">沈阳市大东区东贸路鑫中发果品批发市场21号</text><text y="760" textLength="480" lengthAdjust="spacingAndGlyphs">上海市普陀区曹杨路1350弄24支弄9号山华水果批发市场保（吴智猛收）</text><text y="783" x="-12" textLength="508" lengthAdjust="spacingAndGlyphs">上海市普陀区曹杨路1350弄28-41号山华水果批发市场西部保安室转(刘大哥)</text><text y="828" textLength="305">上海市普陀区曹杨八村105号101室(袁茜琴收)</text><text y="852" textLength="345">上海市卢湾区斜土路10号三得利水果店（王贵根收）</text><text y="1121" textLength="385">北京市丰台区枣林西街远馨楼1号楼1单元7号（牛雷利收）</text></g>
            <g class="faint" transform="translate(1313 6)"><text y="540">嘉玲</text><text y="716">泽勤</text><text y="960">佳志</text><text y="1242">李梅</text></g>
            <g class="faint" transform="translate(1444 6)"><text y="716">ok</text></g>
          </g>
          <path fill="url(#topshade)" d="M78 45H1200V190H78Z"/>
          <path fill="#000" opacity=".1" d="M1108 374Q1290 362 1402 432L1480 520Q1330 400 1108 395Z"/>
        </g>
        <path fill="url(#curl)" stroke="#c2c2c2" stroke-width="2" d="M960 53C1010 60 1055 75 1085 120L1402 432Q1290 362 1106 375C1116 300 1105 210 1072 130Q1040 75 960 53Z"/>
        <text class="badge" x="786" y="1271" textLength="522" lengthAdjust="spacingAndGlyphs" filter="url(#glow)">XLSX</text>
      </svg>
      <h1>销地城市具体地址.xlsx</h1>
      <dl class="info">
        <dt></dt><dd class="kind">Microsoft Excel Workbook (.xlsx)－16 KB</dd>
        <dt>创建时间</dt><dd>2013年4月25日 星期四 下午8:05</dd>
        <dt>修改时间</dt><dd>2013年4月25日 星期四 下午8:05</dd>
        <dt>上次打开时间</dt><dd>2013年4月25日 星期四 下午8:05</dd>
        <dt></dt><dd class="add">添加标记…</dd>
      </dl>
    </section>

    <footer class="path">
      <span class="seg"><svg class="pic" viewBox="0 0 28 28"><path d="M5 1H23L26 20V26Q26 27.500 24.500 27.500H3.500Q2 27.500 2 26V20Z" fill="url(#g-disk)"/><path d="M5 1H23L26 20H2Z" fill="#9ca5a8"/><path d="M8 3.500H20" stroke="#333" stroke-width="2.500"/><circle cx="14" cy="12" r="5" fill="#b5bec1"/><path d="M3 24H25" stroke="#2e3132" stroke-width="3"/></svg><span class="t">Macintosh HD</span><svg class="ch"><use href="#chev"/></svg></span>
      <span class="seg"><svg class="pic" viewBox="0 0 28 28"><use href="#folder" y="2" width="28" height="24"/><circle cx="14" cy="12.500" r="3" fill="#3f9fd0"/><path d="M8 21Q8 16.500 14 16.500T20 21Z" fill="#3f9fd0"/></svg><span class="t">用户</span><svg class="ch"><use href="#chev"/></svg></span>
      <span class="seg"><svg class="pic" viewBox="0 0 28 28"><path d="M5 13L14 5L23 13V26H5Z" fill="#f3f1ee" stroke="#b9b2a8"/><path d="M1.500 15L14 3L26.500 15" fill="none" stroke="#a6804f" stroke-width="3.200"/><path d="M20 3H23V9L20 7Z" fill="#8b6a42"/><path d="M11.500 17H17.500V26H11.500Z" fill="#d98a2b"/><path d="M12 10H16.500V14H12Z" fill="#8f8b85"/></svg><span class="t">bencheung</span><svg class="ch"><use href="#chev"/></svg></span>
      <span class="seg"><svg class="pic" viewBox="0 0 28 28"><use href="#folder" y="2" width="28" height="24"/><path d="M10 9.500H15.500L18.500 12.500V21.500H10Z" fill="none" stroke="#3f9fd0" stroke-width="1.300"/></svg><span class="t">文稿</span><svg class="ch"><use href="#chev"/></svg></span>
      <span class="seg"><svg class="pic" viewBox="0 0 28 28"><use href="#folder" y="2" width="28" height="24"/></svg><span class="t">Enactus生涯</span><svg class="ch"><use href="#chev"/></svg></span>
      <span class="seg"><svg class="pic" viewBox="0 0 28 28"><use href="#folder" y="2" width="28" height="24"/></svg><span class="t">Enactus荔枝</span><svg class="ch"><use href="#chev"/></svg></span>
      <span class="seg"><svg class="pic" viewBox="0 0 28 28"><use href="#excel" width="28" height="28"/></svg><span class="t">销地城市具体地址.xlsx</span></span>
    </footer>
  </div>
</div>
</body>
</html>
```
FILE: styles.css
```css
* { box-sizing: border-box; }
html, body { margin: 0; height: 100%; overflow: hidden; }
body {
  font-family: Inter, "Noto Sans CJK SC", sans-serif;
  color: #262626;
  text-spacing-trim: space-all;
  background: linear-gradient(#8f7f86, #5e5a68 12%, #9a8186 30%, #6c6168 45%, #2c4666 60%, #7c6460 75%, #8a7274);
}
.sprite { position: absolute; width: 0; height: 0; }
.window {
  margin-left: 2px;
  height: 1454px;
  display: flex;
  flex-direction: column;
  border-top-left-radius: 10px;
  overflow: hidden;
  background: #fff;
}
h1, h2, h3, h4, dl, dd, dt { margin: 0; }

/* toolbar */
.toolbar {
  height: 108px;
  flex: none;
  border-bottom: 2px solid #b1b0b2;
  background:
    radial-gradient(ellipse 160px 130px at 1190px 60px, rgba(212, 214, 216, .6), rgba(212, 214, 216, 0)),
    radial-gradient(ellipse 200px 130px at 1030px 20px, rgba(224, 232, 238, .7), rgba(224, 232, 238, 0)),
    linear-gradient(#eeecef, #dbd9dc);
}
.titlebar { height: 42px; display: flex; align-items: center; }
.lights { display: flex; gap: 16px; padding-left: 16px; margin-top: -2px; }
.light { width: 24px; height: 24px; border-radius: 50%; border: 1px solid; }
.red { background: #fc605c; border-color: #e0443f; }
.yellow { background: #fdbc40; border-color: #dea034; }
.green { background: #34c84a; border-color: #27aa35; }
.title { margin-left: 1062px; padding-bottom: 4px; display: flex; align-items: center; gap: 8px; font-size: 26px; letter-spacing: -.3px; color: #3c3c3d; }
.title-icon { width: 32px; height: 27px; }
.tools { display: flex; padding: 5px 0 0 15px; }
.btn {
  height: 46px;
  display: flex;
  align-items: center;
  justify-content: center;
  border-radius: 8px;
  border: 1px solid #cfced0;
  border-bottom-color: #a9a8aa;
  background: linear-gradient(#fefefe, #f1f1f1);
  box-shadow: 0 1px 1px rgba(0, 0, 0, .12);
}
.back { width: 53px; padding-right: 5px; }
.forward { width: 50px; margin-left: 1px; padding-left: 2px; }
.views { width: 222px; margin-left: 158px; justify-content: flex-start; overflow: hidden; }
.view { height: 46px; width: 57px; display: flex; align-items: center; justify-content: center; }
.view.list { width: 54px; border-left: 2px solid #dcdcdc; padding-right: 2px; }
.view.active { width: 56px; background: #6c6c6c; padding-right: 2px; }
.view.flow { width: 53px; }
.arrange { width: 78px; margin-left: 14px; gap: 11px; }
.tag { width: 78px; margin-left: 14px; }
.share { width: 78px; margin-left: 14px; padding-bottom: 3px; }
.search {
  margin-left: 1116px;
  flex: 1;
  height: 46px;
  border-radius: 8px;
  border: 1px solid #cfced0;
  border-bottom-color: #a9a8aa;
  background: linear-gradient(#fefefe, #f1f1f1);
  display: flex;
  align-items: center;
  gap: 10px;
  padding: 0 0 2px 265px;
  font-size: 26px;
  color: #9b9b9b;
}

/* tabs */
.tabs { height: 46px; flex: none; display: flex; border-bottom: 2px solid #9b9a9c; background: linear-gradient(#dcdbdc, #d3d2d4); }
.tab { flex: 1; border-left: 2px solid #b5b4b6; display: flex; align-items: center; justify-content: center; padding: 0 3px 3px 0; font-size: 22px; letter-spacing: 0; color: #1c1c1c; }
.new-tab { width: 38px; border-left: 2px solid #a1a0a2; background: #c0bfc1; display: flex; align-items: center; padding-left: 16px; overflow: hidden; }
.new-tab svg { flex: none; }

/* browser */
.content {
  flex: 1;
  min-height: 0;
  display: grid;
  grid-template-columns: 270px 380px 30px 380px 30px 380px 30px 1fr;
  grid-template-rows: 1258px 42px;
}
.sidebar {
  grid-row: 1 / 3;
  border-right: 2px solid #d2d1d3;
  color: #3d3d3f;
  font-size: 22px;
  background:
    radial-gradient(ellipse 180px 260px at 270px 150px, #e2e6e9, rgba(226, 230, 233, 0)),
    radial-gradient(ellipse 160px 160px at 60px 100px, #efe5e8, rgba(239, 229, 232, 0)),
    radial-gradient(ellipse 200px 120px at 60px 290px, #e9eaf0, rgba(233, 234, 240, 0)),
    linear-gradient(#efeaec, #ebebee 25%, #f0eeed 40%, #eeeff0 50%, #efefef);
}
.sidebar h2 { height: 52px; padding: 16px 0 0 18px; line-height: 36px; font-size: 22px; font-weight: 500; color: #737275; -webkit-text-stroke: .5px; }
.sidebar h2.first { height: 44px; padding-top: 8px; }
.place { height: 44px; display: flex; align-items: center; gap: 12px; padding: 0 0 4px 36px; white-space: nowrap; }
.place.latin { padding-bottom: 0; }
.pi { width: 32px; height: 32px; flex: none; }
.place .pi { margin-top: 2px; }
.place.latin .pi { margin-top: 0; }
.place.selected { background: linear-gradient(100deg, #c9c7cc, #cbbfc4 50%, #b9b1b7); color: #1b1b1c; -webkit-text-stroke: .5px; }

.column { min-width: 0; height: 1258px; overflow: hidden; display: flex; flex-direction: column; }
.column h3 { height: 46px; flex: none; border-bottom: 2px solid #bebebe; background: #efefef; padding-left: 12px; line-height: 43px; font-size: 22px; font-weight: 500; position: relative; -webkit-text-stroke: .6px; }
.third h3 { background: linear-gradient(90deg, #e6eeec, #efefef 35%); }
.rows { padding-top: 6px; display: flex; flex-direction: column; }
.rows.scrolled { margin-top: -12px; }
.row { height: 38px; flex: none; margin-bottom: 2px; display: flex; align-items: center; font-size: 28px; letter-spacing: -.12px; font-variant-numeric: tabular-nums; white-space: nowrap; padding: 0 4px 0 12px; }
.row.n { letter-spacing: -.65px; padding-top: 1px; }
.row.hb { letter-spacing: -.25px; padding-top: 1px; }
.row.dump { letter-spacing: -.55px; padding-top: 1px; }
.row.tight { letter-spacing: -.35px; }
.fi { width: 36px; height: 34px; flex: none; margin-right: 12px; }
.dir .fi { height: 28px; }
.fi.wide, .fi.pez { height: 26px; }
.fi.thumb { height: 30px; }
.ar { width: 12px; height: 14px; margin: 0 0 2px auto; color: #7f7f7f; flex: none; }
.open { background: #dadada; }
.open .ar { color: #6c6c6c; }
.current { background: #116bd8; color: #fff; }
.column h4 { margin: 8px 0 0; height: 52px; flex: none; border-top: 2px solid #d6d6d6; padding-left: 12px; line-height: 46px; font-size: 22px; font-weight: 400; }
.column h4 { margin-top: 10px; height: 50px; line-height: 44px; }
.tag-text { font-size: 5.5px; font-weight: 500; fill: #777; text-anchor: middle; letter-spacing: 0; }
.tag-text.big { font-size: 6.5px; }

.gutter { background: #fafafa; border-left: 2px solid #e9e9e9; border-right: 2px solid #ededed; display: flex; flex-direction: column; justify-content: flex-end; align-items: center; padding-bottom: 8px; }
.grip { width: 11px; height: 14px; border: solid #9f9f9f; border-width: 0 2px; margin-right: 1px; }
.scrollbar { width: 16px; height: 648px; border-radius: 8px; background: #c1c1c1; margin-bottom: 14px; }

/* preview */
.preview { width: 1058px; display: flex; flex-direction: column; align-items: center; }
.sheet { width: 520px; height: 470px; margin-top: 216px; flex: none; }
.cells { font-size: 15.5px; text-anchor: middle; fill: #161613; stroke: #161613; stroke-width: .7; opacity: .85; }
.cells .b { font-weight: 700; }
.cells .addr { font-size: 14.5px; }
.cells .long { text-anchor: start; font-size: 14.5px; }
.cells .cut { text-anchor: start; }
.cells .faint { opacity: .7; }
.badge { font-size: 215px; text-anchor: middle; fill: #858585; }
.preview h1 { margin-top: 219px; line-height: 50px; font-size: 34px; font-weight: 400; color: #000; letter-spacing: -.35px; }
.info { align-self: stretch; margin-top: 38px; display: grid; grid-template-columns: 419px 1fr; column-gap: 17px; grid-template-rows: 35px; grid-auto-rows: 34px; line-height: 36px; font-size: 24px; color: #000; white-space: nowrap; }
.info dt { text-align: right; color: #9c9c9c; -webkit-text-stroke: .4px; }
.info .kind { color: #9c9c9c; font-weight: 500; letter-spacing: .05px; line-height: 33px; }
.info .add { color: #3a8cfb; }

/* path bar */
.path { grid-column: 2 / -1; border-top: 2px solid #c6c6c6; background: linear-gradient(#fdfdfd, #f5f5f5); display: grid; grid-template-columns: 218px 113px 188px 114px 198px 198px auto; padding: 7px 0 0 24px; font-size: 22px; color: #1e1e1e; align-items: center; overflow: hidden; }
.seg { display: flex; align-items: center; white-space: nowrap; }
.pic { width: 28px; height: 28px; margin-right: 9px; flex: none; }
.t { letter-spacing: -.1px; }
.ch { width: 10px; height: 14px; margin-left: auto; margin-right: 13px; flex: none; }
```
